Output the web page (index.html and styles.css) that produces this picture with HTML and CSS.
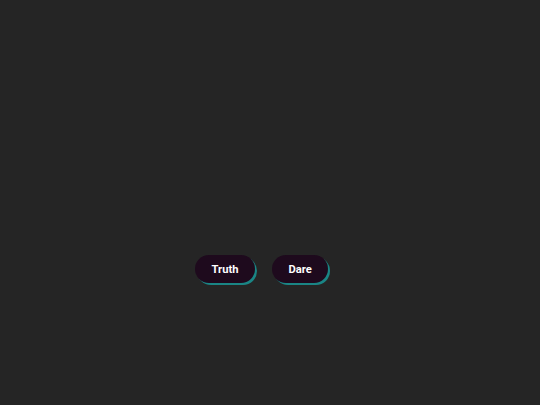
FILE: index.html
```html
<!DOCTYPE html>
<html>
<head>
<meta charset="utf-8">
<link rel="stylesheet" href="styles.css">
</head>
<body>
<div class="choices">
  <button class="choice">Truth</button>
  <button class="choice">Dare</button>
</div>
</body>
</html>
```
FILE: styles.css
```css
html, body {
  margin: 0;
  height: 100%;
  background: #252525;
}
.choices {
  display: flex;
  gap: 17px;
  padding: 255px 0 0 195px;
}
.choice {
  height: 28px;
  padding: 0 16.5px;
  border: none;
  border-radius: 14px;
  background: #1e0a1d;
  color: #ffffff;
  font-family: Roboto, "Liberation Sans", sans-serif;
  font-weight: 700;
  font-size: 11.2px;
  box-shadow: 2px 2px 0 #1a8585;
  cursor: pointer;
}
```
